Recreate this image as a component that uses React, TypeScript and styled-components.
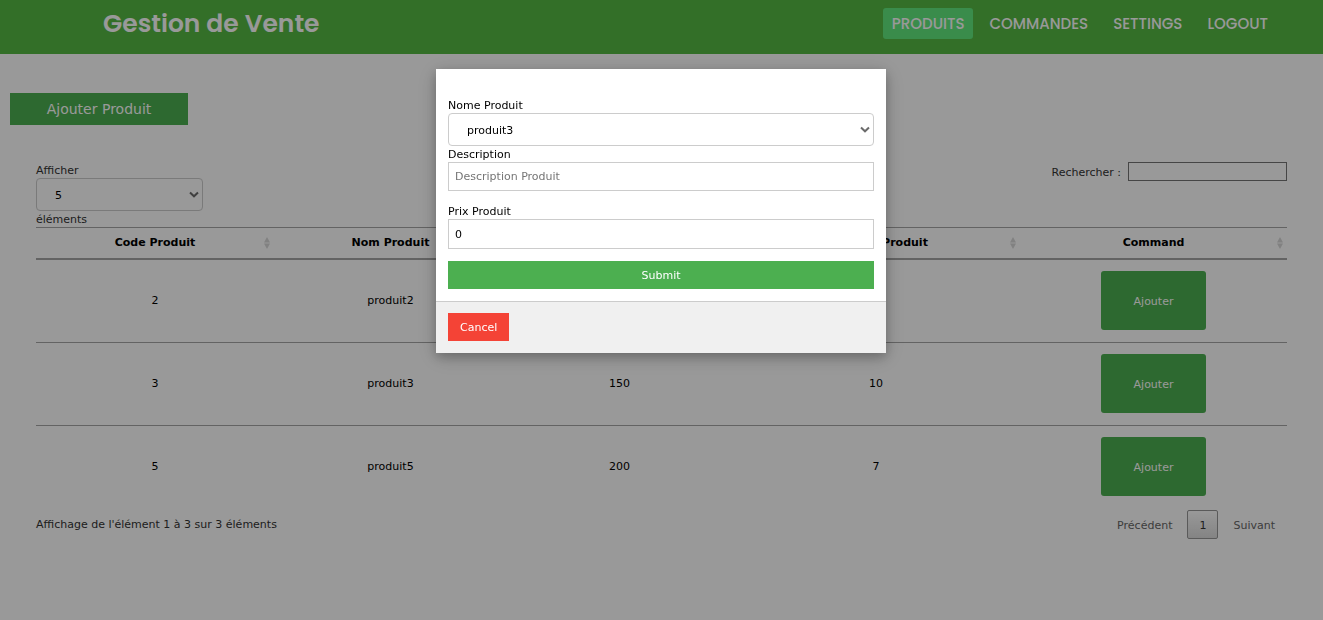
import React, { useState } from 'react';
import styled, { createGlobalStyle } from 'styled-components';

const GlobalStyle = createGlobalStyle`
  *, *::before, *::after { box-sizing: border-box; }
  body {
    margin: 0;
    background: #fff;
    color: #000;
    font: 11px/16px Verdana, "DejaVu Sans", sans-serif;
  }
  button, input, select { font: inherit; }
`;

const Header = styled.header`
  display: flex;
  justify-content: space-between;
  align-items: flex-start;
  padding: 8px 46px 15px 103px;
  background: #55b944;
  font-family: Poppins, Inter, sans-serif;
`;

const Brand = styled.h1`
  margin: 0;
  color: #fff;
  font-size: 25px;
  line-height: 31px;
  font-weight: 600;
`;

const Nav = styled.nav`
  display: flex;
  gap: 7px;
`;

const NavLink = styled.a<{ $active?: boolean }>`
  padding: 0 9px;
  border-radius: 3px;
  background: ${(p) => (p.$active ? '#61ea7d' : 'transparent')};
  color: #fff;
  font-size: 15px;
  line-height: 31px;
  font-weight: 500;
  text-decoration: none;
  text-transform: uppercase;
`;

const Toolbar = styled.div`
  padding: 39px 10px 37px;
`;

const AddButton = styled.button`
  width: 178px;
  height: 32px;
  padding: 0;
  border: 0;
  background: #4caf50;
  color: #fff;
  font-size: 14px;
`;

const Content = styled.main`
  padding: 0 36px;
`;

const Controls = styled.div`
  display: flex;
  justify-content: space-between;
  align-items: flex-start;
  color: #333;
`;

const Field = styled.label`
  display: block;
`;

const LabelText = styled.span`
  display: block;
  padding-top: 2px;
  line-height: 14px;
`;

const SelectBox = styled.span<{ $width?: string }>`
  position: relative;
  display: block;
  width: ${(p) => p.$width ?? '100%'};
`;

const SelectInput = styled.select`
  appearance: none;
  display: block;
  width: 100%;
  height: 33px;
  padding: 2px 24px 0 18px;
  border: 1px solid #ccc;
  border-radius: 4px;
  background: transparent;
  color: #000;
`;

const Chevron = styled.svg`
  position: absolute;
  top: 13px;
  right: 4px;
  width: 10px;
  height: 7px;
  fill: none;
  stroke: #6b6b6b;
  stroke-width: 2;
  pointer-events: none;
`;

const SearchLabel = styled.label`
  display: flex;
  align-items: center;
  gap: 7px;
`;

const SearchInput = styled.input`
  width: 159px;
  height: 19px;
  padding: 0 2px;
  border: 1px solid #767676;
  background: #fff;
`;

const Table = styled.table`
  width: 100%;
  border-collapse: separate;
  border-spacing: 0;
  table-layout: fixed;
  text-align: center;
`;

const HeadCell = styled.th<{ $width: number }>`
  width: ${(p) => p.$width}px;
  height: 33px;
  padding: 0;
  border-top: 1px solid #a5a5a5;
  border-bottom: 2px solid #a5a5a5;
  font-weight: bold;
`;

const HeadContent = styled.div`
  display: grid;
  grid-template-columns: 11px 1fr 11px;
  align-items: center;
`;

const SortIcon = styled.svg`
  display: block;
  grid-column: 3;
  width: 8px;
  height: 12px;
  fill: #d8d8d8;
`;

const HeadText = styled.span`
  grid-column: 2;
`;

const Row = styled.tr`
  &:not(:last-child) > td { border-bottom: 1px solid #a5a5a5; }
`;

const Cell = styled.td`
  padding: 11px 0 12px;
`;

const OrderButton = styled.button`
  display: block;
  width: 105px;
  height: 59px;
  margin: 0 auto;
  padding: 2px 0 0;
  border: 0;
  border-radius: 3px;
  background: #4caf50;
  color: #fff;
`;

const TableFooter = styled.div`
  display: flex;
  justify-content: space-between;
  align-items: center;
  padding-top: 2px;
  color: #333;
`;

const Pager = styled.div`
  display: flex;
  gap: 3px;
`;

const PageButton = styled.button<{ $current?: boolean }>`
  height: 29px;
  padding: 2px 11px 0;
  border: 1px solid ${(p) => (p.$current ? '#979797' : 'transparent')};
  border-radius: 2px;
  background: ${(p) => (p.$current ? 'linear-gradient(#fff, #dcdcdc)' : 'transparent')};
  color: ${(p) => (p.$current ? '#333' : '#666')};
`;

const Overlay = styled.div`
  position: fixed;
  inset: 0;
  z-index: 3;
  display: flex;
  justify-content: center;
  align-items: flex-start;
  padding: 69px 1px 0 0;
  background: rgba(0, 0, 0, 0.4);
`;

const Dialog = styled.div`
  width: 450px;
  max-width: 100%;
  background: #fff;
  box-shadow: 0 4px 10px 0 rgba(0, 0, 0, 0.2), 0 4px 20px 0 rgba(0, 0, 0, 0.19);
`;

const Form = styled.form`
  padding: 28px 12px 12px;
`;

const TextInput = styled.input<{ $height: number }>`
  display: block;
  width: 100%;
  height: ${(p) => p.$height}px;
  margin-bottom: 12px;
  padding: 0 6px;
  border: 1px solid #ccc;
  background: #fff;
  color: #000;
  &::placeholder { color: #757575; }
`;

const DialogButton = styled.button<{ $tone: 'submit' | 'cancel' }>`
  display: block;
  width: ${(p) => (p.$tone === 'submit' ? '100%' : 'auto')};
  height: 28px;
  padding: 2px 12px 0;
  border: 0;
  background: ${(p) => (p.$tone === 'submit' ? '#4caf50' : '#f44336')};
  color: #fff;
`;

const DialogFooter = styled.div`
  padding: 11px 12px 12px;
  border-top: 1px solid #ccc;
  background: #f0f0f0;
`;

const columns = [
  { title: 'Code Produit', width: 238 },
  { title: 'Nom Produit', width: 233 },
  { title: 'Prix Produit', width: 225 },
  { title: 'Quantité Produit', width: 288 },
  { title: 'Command', width: 267 },
];

const products = [
  { code: 2, name: 'produit2', price: 100, quantity: 5 },
  { code: 3, name: 'produit3', price: 150, quantity: 10 },
  { code: 5, name: 'produit5', price: 200, quantity: 7 },
];

const links = ['Produits', 'Commandes', 'Settings', 'Logout'];

type SelectProps = { options: string[]; value: string; width?: string };

function Select({ options, value, width }: SelectProps) {
  return (
    <SelectBox $width={width}>
      <SelectInput defaultValue={value}>
        {options.map((o) => <option key={o}>{o}</option>)}
      </SelectInput>
      <Chevron viewBox="0 0 10 7" aria-hidden="true">
        <path d="M1 1.500 5 5.300 9 1.500" />
      </Chevron>
    </SelectBox>
  );
}

export default function App() {
  const [open, setOpen] = useState(true);

  return (
    <>
      <GlobalStyle />
      <Header>
        <Brand>Gestion de Vente</Brand>
        <Nav>
          {links.map((link, i) => (
            <NavLink key={link} href="#" $active={i === 0}>{link}</NavLink>
          ))}
        </Nav>
      </Header>
      <Toolbar>
        <AddButton type="button" onClick={() => setOpen(true)}>Ajouter Produit</AddButton>
      </Toolbar>
      <Content>
        <Controls>
          <Field>
            <LabelText>Afficher</LabelText>
            <Select width="167px" value="5" options={['5', '10', '25']} />
            <LabelText>éléments</LabelText>
          </Field>
          <SearchLabel>
            <LabelText>Rechercher :</LabelText>
            <SearchInput type="search" />
          </SearchLabel>
        </Controls>
        <Table>
          <thead>
            <tr>
              {columns.map((c) => (
                <HeadCell key={c.title} $width={c.width}>
                  <HeadContent>
                    <HeadText>{c.title}</HeadText>
                    <SortIcon viewBox="0 0 8 12" aria-hidden="true">
                      <path d="M4 0 7 5.500H1zM4 12 1 6.500h6z" />
                    </SortIcon>
                  </HeadContent>
                </HeadCell>
              ))}
            </tr>
          </thead>
          <tbody>
            {products.map((p) => (
              <Row key={p.code}>
                <Cell>{p.code}</Cell>
                <Cell>{p.name}</Cell>
                <Cell>{p.price}</Cell>
                <Cell>{p.quantity}</Cell>
                <Cell><OrderButton type="button">Ajouter</OrderButton></Cell>
              </Row>
            ))}
          </tbody>
        </Table>
        <TableFooter>
          <span>Affichage de l'élément 1 à 3 sur 3 éléments</span>
          <Pager>
            <PageButton type="button">Précédent</PageButton>
            <PageButton type="button" $current>1</PageButton>
            <PageButton type="button">Suivant</PageButton>
          </Pager>
        </TableFooter>
      </Content>
      {open && (
        <Overlay>
          <Dialog role="dialog" aria-modal="true" aria-label="Ajouter Produit">
            <Form onSubmit={(e) => e.preventDefault()}>
              <Field>
                <LabelText>Nome Produit</LabelText>
                <Select value="produit3" options={products.map((p) => p.name)} />
              </Field>
              <Field>
                <LabelText>Description</LabelText>
                <TextInput type="text" placeholder="Description Produit" $height={29} />
              </Field>
              <Field>
                <LabelText>Prix Produit</LabelText>
                <TextInput type="text" inputMode="numeric" defaultValue="0" $height={30} />
              </Field>
              <DialogButton type="submit" $tone="submit">Submit</DialogButton>
            </Form>
            <DialogFooter>
              <DialogButton type="button" $tone="cancel" onClick={() => setOpen(false)}>Cancel</DialogButton>
            </DialogFooter>
          </Dialog>
        </Overlay>
      )}
    </>
  );
}
